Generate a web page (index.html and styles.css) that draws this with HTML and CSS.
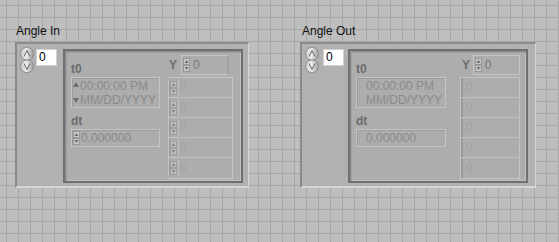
FILE: index.html
```html
<!DOCTYPE html>
<html lang="en">
<head>
    <meta charset="UTF-8">
    <title>Angle In / Angle Out</title>
    <link rel="stylesheet" href="styles.css">
</head>
<body>
    <svg class="defs" width="0" height="0">
        <defs>
            <linearGradient id="knob" x1="0" y1="0" x2="1" y2="0">
                <stop offset="0" stop-color="#c9c9c9"/>
                <stop offset="0.45" stop-color="#ececec"/>
                <stop offset="1" stop-color="#9c9c9c"/>
            </linearGradient>
            <symbol id="big-spin" viewBox="0 0 14 26">
                <rect x="0.5" y="0.5" width="13" height="12.5" rx="6" fill="url(#knob)" stroke="#8a8a8a"/>
                <rect x="0.5" y="13" width="13" height="12.5" rx="6" fill="url(#knob)" stroke="#8a8a8a"/>
                <path d="M4 9.5 L7 3.5 L10 9.5" fill="none" stroke="#6c6c6c" stroke-width="1"/>
                <path d="M4 16.5 L7 22.5 L10 16.5" fill="none" stroke="#6c6c6c" stroke-width="1"/>
            </symbol>
            <symbol id="mini-spin" viewBox="0 0 7 14">
                <rect x="0.5" y="0.5" width="6" height="6" fill="#c8c8c8" stroke="#999"/>
                <rect x="0.5" y="7.5" width="6" height="6" fill="#c8c8c8" stroke="#999"/>
                <path d="M1.5 5 L3.5 2 L5.5 5 Z" fill="#6e6e6e"/>
                <path d="M1.5 9 L3.5 12 L5.5 9 Z" fill="#6e6e6e"/>
            </symbol>
        </defs>
    </svg>

    <div class="panel">
        <!-- control -->
        <div class="control">
            <div class="label">Angle In</div>
            <div class="array">
                <div class="index">
                    <svg class="spin"><use href="#big-spin"/></svg>
                    <div class="num">0</div>
                </div>
                <div class="cluster">
                    <div class="col-left">
                        <div class="name">t0</div>
                        <div class="field stamp">
                            <div class="stamp-arrows">
                                <span class="tri up"></span>
                                <span class="tri down"></span>
                            </div>
                            <div class="text">00:00:00 PM<br>MM/DD/YYYY</div>
                        </div>
                        <div class="name dt">dt</div>
                        <div class="field single">
                            <svg class="mini"><use href="#mini-spin"/></svg>
                            <div class="text">0.000000</div>
                        </div>
                    </div>
                    <div class="col-right">
                        <div class="yrow">
                            <span class="name">Y</span>
                            <div class="yindex">
                                <svg class="mini"><use href="#mini-spin"/></svg>
                                <span>0</span>
                            </div>
                        </div>
                        <div class="elements">
                            <div class="el"><svg class="mini faded"><use href="#mini-spin"/></svg><div class="val">0</div></div>
                            <div class="el"><svg class="mini faded"><use href="#mini-spin"/></svg><div class="val">0</div></div>
                            <div class="el"><svg class="mini faded"><use href="#mini-spin"/></svg><div class="val">0</div></div>
                            <div class="el"><svg class="mini faded"><use href="#mini-spin"/></svg><div class="val">0</div></div>
                            <div class="el"><svg class="mini faded"><use href="#mini-spin"/></svg><div class="val">0</div></div>
                        </div>
                    </div>
                </div>
            </div>
        </div>

        <!-- indicator -->
        <div class="control out">
            <div class="label">Angle Out</div>
            <div class="array">
                <div class="index">
                    <svg class="spin"><use href="#big-spin"/></svg>
                    <div class="num">0</div>
                </div>
                <div class="cluster">
                    <div class="col-left">
                        <div class="name">t0</div>
                        <div class="field stamp">
                            <div class="text">00:00:00 PM<br>MM/DD/YYYY</div>
                        </div>
                        <div class="name dt">dt</div>
                        <div class="field single">
                            <div class="text">0.000000</div>
                        </div>
                    </div>
                    <div class="col-right">
                        <div class="yrow">
                            <span class="name">Y</span>
                            <div class="yindex">
                                <svg class="mini"><use href="#mini-spin"/></svg>
                                <span>0</span>
                            </div>
                        </div>
                        <div class="elements">
                            <div class="el"><div class="val">0</div></div>
                            <div class="el"><div class="val">0</div></div>
                            <div class="el"><div class="val">0</div></div>
                            <div class="el"><div class="val">0</div></div>
                            <div class="el"><div class="val">0</div></div>
                        </div>
                    </div>
                </div>
            </div>
        </div>
    </div>
</body>
</html>
```

FILE: styles.css
```css
body {
    margin: 0;
    width: 559px;
    height: 242px;
    overflow: hidden;
    font-family: 'Liberation Sans', Arial, sans-serif;
    background-color: #bebebe;
    background-image:
        linear-gradient(to right, #a8a8a8 1px, transparent 1px),
        linear-gradient(to bottom, #a8a8a8 1px, transparent 1px);
    background-size: 12px 12px;
    background-position: 6px 5px;
}

.defs {
    position: absolute;
}

.panel {
    display: flex;
    gap: 51px;
    padding: 23px 0 0 15px;
}

.control {
    display: flex;
    flex-direction: column;
}

.label {
    font-size: 12px;
    line-height: 16px;
    height: 16px;
    margin: 0 0 3px 1px;
    color: #111;
}

.out .label {
    margin-left: 2px;
}

/* array frame */
.array {
    box-sizing: border-box;
    display: flex;
    width: 234px;
    height: 146px;
    padding: 3px 5px 0 3px;
    background: #b1b1b1;
    border-style: solid;
    border-width: 2px 1px 2px 2px;
    border-color: #8c8c8c #d6d6d6 #d6d6d6 #8a8a8a;
}

.out .array {
    width: 236px;
}

.index {
    display: flex;
    align-items: flex-start;
    width: 43px;
}

.spin {
    width: 14px;
    height: 26px;
}

.num {
    box-sizing: border-box;
    width: 21px;
    height: 17px;
    margin: 2px 0 0 2px;
    padding-left: 2px;
    background: #fff;
    border: 1px solid #d0d0d0;
    font-size: 12px;
    line-height: 15px;
    color: #000;
}

.out .num {
    margin-left: 4px;
}

/* cluster */
.cluster {
    box-sizing: border-box;
    display: flex;
    width: 180px;
    height: 134px;
    margin-top: 2px;
    padding: 0 6px 0 6px;
    background: #adadad;
    border: 2px solid #6f6f6f;
    box-shadow: inset 1px 1px 0 #8e8e8e, inset 2px 2px 0 #9e9e9e, inset -1px -1px 0 #c2c2c2;
}

.name {
    font-size: 12px;
    font-weight: bold;
    line-height: 14px;
    color: #6c6c6c;
}

.col-left {
    width: 89px;
    padding-top: 11px;
}

.out .col-left {
    width: 91px;
}

.name.dt {
    margin-top: 6px;
}

.field {
    box-sizing: border-box;
    display: flex;
    align-items: center;
    margin-top: 1px;
    border: 1px solid #c4c4c4;
    box-shadow: inset 1px 1px 0 #9c9c9c;
    font-size: 12px;
    color: #8a8a8a;
}

.field.stamp {
    height: 31px;
}

.field.single {
    height: 18px;
}

.field .text {
    line-height: 14px;
    padding-left: 1px;
}

.out .field .text {
    padding-left: 9px;
}

.stamp-arrows {
    display: flex;
    flex-direction: column;
    justify-content: space-between;
    height: 27px;
    padding-left: 1px;
}

.tri {
    width: 0;
    height: 0;
    border-left: 3px solid transparent;
    border-right: 3px solid transparent;
}

.tri.up {
    margin-top: 3px;
    border-bottom: 5px solid #6e6e6e;
}

.tri.down {
    margin-bottom: 3px;
    border-top: 5px solid #6e6e6e;
}

.mini {
    flex: none;
    width: 7px;
    height: 14px;
    margin-left: 1px;
}

.mini.faded {
    opacity: 0.6;
}

/* Y array */
.col-right {
    width: 65px;
    margin-left: 8px;
    padding-top: 4px;
}

.out .col-right {
    width: 60px;
    margin-left: 14px;
}

.yrow {
    display: flex;
    align-items: center;
    height: 20px;
}

.yrow .name {
    width: 12px;
    padding-left: 1px;
}

.out .yrow .name {
    width: 11px;
    padding-left: 2px;
}

.yindex {
    box-sizing: border-box;
    display: flex;
    align-items: center;
    gap: 3px;
    width: 48px;
    height: 20px;
    border: 1px solid #c6c6c6;
    border-right: 2px solid #a0a0a0;
    font-size: 12px;
    color: #777;
}

.out .yindex {
    width: 49px;
    border-right: 1px solid #c6c6c6;
}

.elements {
    box-sizing: border-box;
    margin-top: 2px;
    border: 1px solid #c4c4c4;
    box-shadow: inset 1px 0 0 #9c9c9c;
}

.out .elements {
    box-shadow: inset 2px 0 0 #999;
}

.el {
    display: flex;
    align-items: center;
    height: 19px;
    border-bottom: 1px solid #c0c0c0;
}

.el:last-child {
    border-bottom: none;
    height: 20px;
}

.val {
    flex: 1;
    height: 17px;
    margin-left: 1px;
    padding-left: 1px;
    border-left: 1px solid #c0c0c0;
    font-size: 12px;
    line-height: 17px;
    color: #a2a2a2;
}

.out .val {
    margin-left: 3px;
    border-left: none;
    padding-left: 2px;
}
```
